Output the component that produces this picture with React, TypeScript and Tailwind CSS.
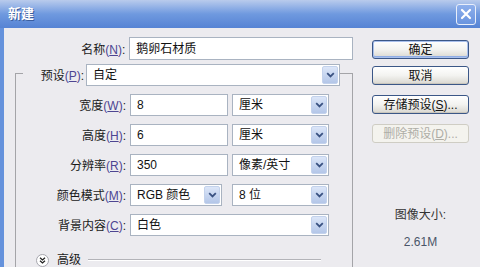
import type { ReactNode } from 'react';

const font = "font-['Liberation_Sans','Noto_Sans_CJK_SC',sans-serif]";

function Chevron() {
  return (
    <svg width="9" height="6" viewBox="0 0 9 6">
      <path d="M1.2 1.2 L4.5 4.4 L7.8 1.2" stroke="#3a5282" strokeWidth="1.8" fill="none" />
    </svg>
  );
}

function ArrowBtn() {
  return (
    <div className="w-[16px] my-[1px] mr-[1px] flex items-center justify-center rounded-[2px] border border-[#c3d2ec] bg-gradient-to-b from-[#dce6f8] to-[#b3c6e8]">
      <Chevron />
    </div>
  );
}

function Select({ cls, value }: { cls: string; value: string }) {
  return (
    <div className={`h-[22px] flex items-stretch bg-white border border-[#a9b3c1] ${cls}`}>
      <div className="flex-1 pl-[6px] flex items-center text-[12px] text-[#111]">{value}</div>
      <ArrowBtn />
    </div>
  );
}

function Input({ cls, value }: { cls: string; value: string }) {
  return (
    <div className={`h-[22px] flex items-center pl-[6px] bg-white border border-[#a9b3c1] text-[12px] text-[#111] ${cls}`}>
      {value}
    </div>
  );
}

function Label({ text, k }: { text: string; k: string }) {
  return (
    <span className="text-[12px] text-[#1a1a1a] whitespace-nowrap">
      {text}
      <span className="text-[#4d4592]">
        (<u>{k}</u>)
      </span>
      :
    </span>
  );
}

function Btn({ children, def, disabled }: { children: ReactNode; def?: boolean; disabled?: boolean }) {
  const base = 'w-[97px] h-[19px] flex items-center justify-center rounded-[3px] text-[12px]';
  if (disabled) {
    return (
      <div className={`${base} border border-[#cfcdc4] bg-[#f4f3ee] text-[#aeada6]`}>{children}</div>
    );
  }
  return (
    <div
      className={`${base} border border-[#3b5787] bg-gradient-to-b from-white via-[#f3f3f0] to-[#d9d7d0] text-[#111] ${
        def ? 'shadow-[inset_0_0_0_1px_#a9c0ec,inset_0_-1px_0_1px_#8fadE6]' : 'shadow-[inset_0_-1px_0_0_#c9c6bd]'
      }`}
    >
      {children}
    </div>
  );
}

function Row({ label, k, children }: { label: string; k: string; children: ReactNode }) {
  return (
    <div className="flex items-center h-[22px]">
      <div className="w-[110px] text-right">
        <Label text={label} k={k} />
      </div>
      <div className="ml-[4px] flex items-center">{children}</div>
    </div>
  );
}

export default function App() {
  return (
    <div className={`w-[480px] h-[267px] overflow-hidden flex flex-col bg-[#6592dc] ${font}`}>
      <div className="h-[29px] flex items-center justify-between pl-[8px] pr-[4px] bg-gradient-to-b from-[#b9cbec] via-[#6f99df] to-[#5683d4]">
        <span className="text-white font-bold text-[13px] [text-shadow:1px_1px_0_#3a5d9e]">新建</span>
        <div className="w-[20px] h-[21px] rounded-[3px] border border-[#e8eefa] bg-gradient-to-b from-[#8eb0ec] to-[#6a94df] flex items-center justify-center">
          <svg width="12" height="12" viewBox="0 0 12 12">
            <path d="M2 2 L10 10 M10 2 L2 10" stroke="white" strokeWidth="2.2" strokeLinecap="round" />
          </svg>
        </div>
      </div>

      <div className="flex-1 flex ml-[4px] bg-[#ecebef]">
        <div className="w-[349px] pt-[9px] flex flex-col">
          <div className="flex items-center h-[23px]">
            <div className="w-[122px] text-right">
              <Label text="名称" k="N" />
            </div>
            <Input cls="ml-[4px] w-[225px] h-[23px]" value="鹅卵石材质" />
          </div>

          <div className="mt-[13px] ml-[11px] w-[338px] flex-1 border-l border-t border-r border-[#a4a4a8] flex flex-col gap-[8px]">
            <div className="-mt-[10px] flex items-center h-[22px] pl-[7px]">
              <div className="w-[63px] text-right pr-[2px] bg-[#ecebef]">
                <Label text="预设" k="P" />
              </div>
              <Select cls="w-[254px]" value="自定" />
            </div>

            <Row label="宽度" k="W">
              <Input cls="w-[98px]" value="8" />
              <Select cls="ml-[4px] w-[97px]" value="厘米" />
            </Row>
            <Row label="高度" k="H">
              <Input cls="w-[98px]" value="6" />
              <Select cls="ml-[4px] w-[97px]" value="厘米" />
            </Row>
            <Row label="分辨率" k="R">
              <Input cls="w-[98px]" value="350" />
              <Select cls="ml-[4px] w-[97px]" value="像素/英寸" />
            </Row>
            <Row label="颜色模式" k="M">
              <Select cls="w-[92px]" value="RGB 颜色" />
              <Select cls="ml-[10px] w-[97px]" value="8 位" />
            </Row>
            <Row label="背景内容" k="C">
              <Select cls="w-[199px]" value="白色" />
            </Row>

            <div className="mt-[9px] flex items-center pl-[20px] h-[14px]">
              <div className="w-[13px] h-[13px] rounded-full border border-[#a6a6ae] bg-white flex items-center justify-center">
                <svg width="7" height="7" viewBox="0 0 7 7">
                  <path d="M1 0.8 L3.5 3 L6 0.8 M1 3.8 L3.5 6 L6 3.8" stroke="#222" strokeWidth="1.3" fill="none" />
                </svg>
              </div>
              <span className="ml-[8px] text-[12px] text-[#1a1a1a]">高级</span>
              <div className="ml-[7px] w-[233px] h-[2px] border-t border-[#b3b3b8] border-b border-b-white" />
            </div>
          </div>
        </div>

        <div className="flex-1 flex flex-col pl-[19px] pt-[12px]">
          <Btn def>确定</Btn>
          <div className="mt-[7px]">
            <Btn>取消</Btn>
          </div>
          <div className="mt-[10px]">
            <Btn>
              存储预设(<u>S</u>)...
            </Btn>
          </div>
          <div className="mt-[10px]">
            <Btn disabled>
              删除预设(<u>D</u>)...
            </Btn>
          </div>
          <div className="mt-[63px] w-[97px] text-center text-[12px] text-[#333]">图像大小:</div>
          <div className="mt-[9px] w-[97px] text-center text-[12px] text-[#4a5568]">2.61M</div>
        </div>
      </div>
    </div>
  );
}
